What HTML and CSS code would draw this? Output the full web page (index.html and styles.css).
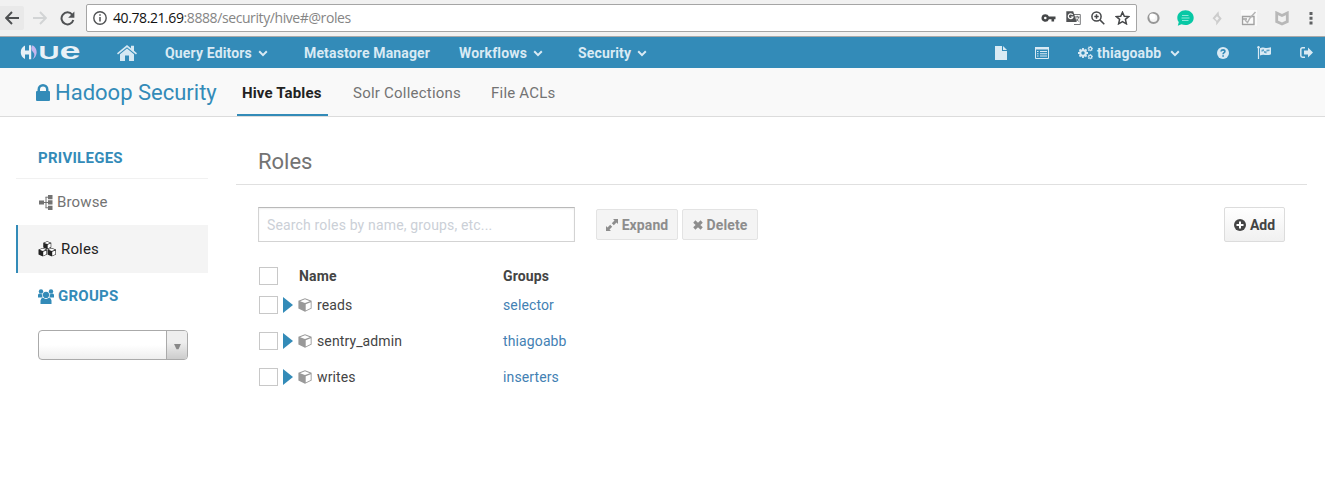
FILE: index.html
```html
<!DOCTYPE html>
<html lang="en">
<head>
<meta charset="utf-8">
<title>Hadoop Security</title>
<link rel="stylesheet" href="styles.css">
</head>
<body>
<svg class="defs" width="0" height="0">
  <symbol id="chev" viewBox="0 0 10 7"><path d="M1.2 1.3 5 5.1 8.8 1.3" fill="none" stroke="currentColor" stroke-width="2"/></symbol>
  <symbol id="cube" viewBox="0 0 14 14"><path d="M7 .3 13.6 2.8V10.6L7 13.7.4 10.6V2.8Z" fill="currentColor"/><path d="M7 1.3 11.9 3.2 7 5.1 2.1 3.2ZM7.7 6.2 12.7 4.2V10L7.7 12.4Z" fill="#fff"/></symbol>
  <symbol id="gear" viewBox="0 0 12 12"><circle cx="6" cy="6" r="3.3" fill="none" stroke="currentColor" stroke-width="2.4"/><path d="M6 0V2.5M6 9.5V12M0 6H2.5M9.5 6H12M1.8 1.8 3.3 3.3M8.7 8.7 10.2 10.2M10.2 1.8 8.7 3.3M3.3 8.7 1.8 10.2" stroke="currentColor" stroke-width="2.2"/></symbol>
</svg>

<div class="browser">
  <span class="back"><svg width="14" height="14" viewBox="0 0 14 14"><path d="M14 7H1.5M7 1 1.2 7 7 13" fill="none" stroke="#4d4f51" stroke-width="1.9"/></svg></span>
  <svg class="forward" width="14" height="14" viewBox="0 0 14 14"><path d="M0 7H12.5M7 1 12.8 7 7 13" fill="none" stroke="#d2d4d5" stroke-width="1.9"/></svg>
  <svg class="reload" width="15" height="15" viewBox="0 0 15 15"><path d="M12.2 3.6A6 6 0 1 0 13.3 9" fill="none" stroke="#505254" stroke-width="2"/><path d="M14.4.5V6.7H8.2Z" fill="#505254"/></svg>
  <div class="address">
    <svg class="info" width="14" height="14" viewBox="0 0 14 14"><circle cx="7" cy="7" r="6.2" fill="none" stroke="#505254" stroke-width="1.4"/><path d="M7 6V10.6M7 3.2V4.7" stroke="#505254" stroke-width="1.5"/></svg>
    <span class="url"><b>40.78.21.69</b>:8888/security/hive#@roles</span>
    <span class="tools">
      <svg width="15" height="14" viewBox="0 0 15 14"><path d="M4.3 3.2a3.8 3.8 0 1 0 3.6 5h2.6v2.4h2.6V8.200h1.400V5.600H7.900A3.800 3.800 0 0 0 4.300 3.200Zm0 2.500a1.300 1.300 0 1 1 0 2.600 1.300 1.300 0 0 1 0-2.600Z" fill="#454749" fill-rule="evenodd"/></svg>
      <svg width="15" height="14" viewBox="0 0 15 14"><path d="M6 3.500H14.300V13.500H8" fill="#fff" stroke="#77797b"/><path d="M.3.3H7.200L10.700 11H.3Z" fill="#505254"/><path d="M6.700 3.900A2.400 2.400 0 1 0 7 6H4.800" fill="none" stroke="#fff" stroke-width="1.200"/><path d="M9 6H13.500M11.200 4.800V6M12.800 6C12 8.500 11 9.500 9.800 10.300M10 7.500 12.700 10.500" stroke="#66686a" fill="none"/></svg>
      <svg width="14" height="14" viewBox="0 0 14 14"><circle cx="5.500" cy="5.500" r="4.600" fill="none" stroke="#454749" stroke-width="1.500"/><path d="M8.900 8.900 13.300 13.300M3.300 5.500H7.700M5.500 3.300V7.700" stroke="#454749" stroke-width="1.500"/></svg>
      <svg width="15" height="14" viewBox="0 0 15 14"><path d="M7.500 1.200 9.300 5.200 13.700 5.600 10.400 8.400 11.400 12.800 7.500 10.500 3.600 12.800 4.600 8.400 1.300 5.600 5.700 5.200Z" fill="none" stroke="#454749" stroke-width="1.500"/></svg>
    </span>
  </div>
  <svg class="ext e1" width="13" height="14" viewBox="0 0 13 14"><circle cx="6.500" cy="7" r="5" fill="#f5f5f5" stroke="#969696" stroke-width="2.200"/><circle cx="5.300" cy="5.500" r="3" fill="#fff"/></svg>
  <svg class="ext e2" width="17" height="16" viewBox="0 0 17 16"><path d="M8.500.3C13 .3 16.700 3.500 16.700 7.700S13 15 8.500 15C6.800 15 5.500 14.700 4.500 14.200L.8 15.700 1.800 12C.8 11 .3 9.500.3 7.700.3 3.500 4 .3 8.500.3Z" fill="#08c8a5"/><path d="M5 5.500H11.500M4.500 8H12.500M5 10.500H11.500" stroke="#8de9d9" stroke-width="1.200"/></svg>
  <svg class="ext e3" width="10" height="15" viewBox="0 0 10 15"><path d="M6.500.3 7 4.500 9.700 7.500 4.200 14.500V10.700L.5 7.200Z" fill="#cdcdcd"/><path d="M5 5.200 7 7.300 5 9.700 3 7.400Z" fill="#f2f2f2"/></svg>
  <svg class="ext e4" width="16" height="16" viewBox="0 0 16 16"><path d="M0 0H16V16H0Z" fill="#fafafa"/><path d="M1.500 6.500H13V14.500H1.500ZM1.500 9H6" fill="none" stroke="#a1a1a1" stroke-width="1.400"/><path d="M4 10 6.500 12.500 9 8 14.500 2" fill="none" stroke="#b5b5b5" stroke-width="1.500"/></svg>
  <svg class="ext e5" width="14" height="15" viewBox="0 0 14 15"><path d="M1.700 2 7 4.500 12.300 2V10.500L7 13 1.700 10.500Z" fill="none" stroke="#b8b8b8" stroke-width="2.800"/></svg>
  <svg class="ext e6" width="4" height="14" viewBox="0 0 4 14"><path d="M.5 1H3.500V4H.5ZM.5 5.800H3.500V8.800H.5ZM.5 10.600H3.500V13.600H.5Z" fill="#5f6163"/></svg>
</div>

<nav class="navbar">
  <svg class="logo" width="64" height="31" viewBox="0 -7 64 31">
    <path d="M7 1.500A7.500 7.500 0 0 0 7 15V10.500H11V15.200H13.200V1.200H11V6.500H7Z" fill="#e9f1f7"/>
    <path d="M14.500 1.200A8 8 0 0 1 14.500 15.200Q18 11 15 8T14.500 1.200Z" fill="#c5b6ee"/>
    <text class="mark" x="20.500" y="15.200" textLength="21" lengthAdjust="spacingAndGlyphs">U</text>
    <text class="mark lower" x="41.500" y="15" textLength="21" lengthAdjust="spacingAndGlyphs">e</text>
  </svg>
  <svg class="home" width="20" height="16" viewBox="0 0 20 16"><path d="M0 8.300 10 0 14 3.300V.8H17V5.800L20 8.300 19 9.500 10 2.200 1 9.500ZM3 9.200 10 3.500 17 9.200V16H12V10.500H8V16H3Z" fill="#d5e8f3"/></svg>
  <span class="item query">Query Editors<svg width="10" height="7"><use href="#chev"/></svg></span>
  <span class="item meta">Metastore Manager</span>
  <span class="item work">Workflows<svg width="10" height="7"><use href="#chev"/></svg></span>
  <span class="item sec">Security<svg width="10" height="7"><use href="#chev"/></svg></span>
  <span class="right">
    <svg class="file" width="12" height="14" viewBox="0 0 12 14"><path d="M0 0H7V5H12V14H0ZM8 0 12 4H8Z" fill="currentColor"/></svg>
    <svg class="list" width="14" height="12" viewBox="0 0 14 12"><path d="M.5.500H13.500V11.500H.5Z" fill="none" stroke="currentColor"/><path d="M0 0H14V2.500H0ZM2 4H3.500V5H2ZM5 4H12V5H5ZM2 6.300H3.500V7.300H2ZM5 6.300H12V7.300H5ZM2 8.600H3.500V9.600H2ZM5 8.600H12V9.600H5Z" fill="currentColor"/></svg>
    <svg class="gears" width="15" height="14" viewBox="0 0 15 14"><use href="#gear" x="0" y="2" width="10" height="10"/><use href="#gear" x="9.500" y="0" width="5.500" height="5.500"/><use href="#gear" x="9.500" y="8" width="5.500" height="5.500"/></svg>
    <span class="item user">thiagoabb<svg width="10" height="7"><use href="#chev"/></svg></span>
    <svg class="help" width="12" height="12" viewBox="0 0 12 12"><circle cx="6" cy="6" r="6" fill="currentColor"/><path d="M4 4.500C4.200 2.300 7.900 2.400 7.900 4.400 7.900 5.700 6.100 5.700 6.100 7.200M6.100 8.200V9.800" fill="none" stroke="#338bb8" stroke-width="1.600"/></svg>
    <svg class="flag" width="15" height="13" viewBox="0 0 15 13"><path d="M1.500 1V13" stroke="currentColor" stroke-width="1.200"/><circle cx="1.500" cy="1.200" r="1.200" fill="currentColor"/><path d="M3 2.200C6 .2 8 3.200 14 1.200V8.200C9 10.500 7 7.200 3 9.500Z" fill="currentColor"/><path d="M4.500 3.800 7 3.200V5L9.500 5.500V3.800L12.500 3.400V5L9.500 5.600V7.400L7 6.700V5.100L4.500 5.700Z" fill="#338bb8" opacity=".75"/></svg>
    <svg class="out" width="13" height="11" viewBox="0 0 13 11"><path d="M5 .8H2.500Q.8.800.8 2.500V8.500Q.8 10.200 2.500 10.200H5" fill="none" stroke="currentColor" stroke-width="1.500"/><path d="M4 3.500H8V.5L13 5.500 8 10.500V7.500H4Z" fill="currentColor"/></svg>
  </span>
</nav>

<header class="subnav">
  <svg class="lock" width="14" height="17" viewBox="0 0 14 17"><path d="M0 8Q0 7 1 7H1.500V5.500A5.500 5.500 0 0 1 12.500 5.500V7H13Q14 7 14 8V16Q14 17 13 17H1Q0 17 0 16ZM4 7H10V5.500A3 3 0 0 0 4 5.500Z" fill="#338bb8" fill-rule="evenodd"/></svg>
  <span class="app">Hadoop Security</span>
  <span class="tab active">Hive Tables</span>
  <span class="tab solr">Solr Collections</span>
  <span class="tab acl">File ACLs</span>
</header>

<div class="page">
  <aside class="side">
    <div class="head first">PRIVILEGES</div>
    <div class="entry"><svg class="tree" width="14" height="15" viewBox="0 0 14 15"><path d="M0 5.500H5V9.500H0ZM9 0H13.500V4.300H9ZM9 5.300H13.500V9.600H9ZM9 10.700H13.500V15H9Z" fill="currentColor"/><path d="M4 7.500H10M7 2.200V12.800M6.500 2.200H9M6.500 12.800H9" fill="none" stroke="currentColor"/></svg><span class="browse">Browse</span></div>
    <div class="entry current"><svg class="cubes" width="19" height="16" viewBox="0 0 19 16"><use href="#cube" x="4.500" y="0" width="9.500" height="8.500"/><use href="#cube" x="0" y="6.700" width="9.500" height="9"/><use href="#cube" x="9" y="6.700" width="9.500" height="9"/></svg><span>Roles</span></div>
    <div class="head groups"><svg width="16" height="15" viewBox="0 0 16 15"><circle cx="3" cy="2.500" r="2.200"/><circle cx="13" cy="2.500" r="2.200"/><path d="M0 8.500V6Q0 4.500 1.500 4.500L4.500 5.500Q3.800 7.200 4.700 8.500ZM16 8.500V6Q16 4.500 14.500 4.500L11.500 5.500Q12.200 7.200 11.300 8.500ZM2.500 15V11.500Q2.800 8.800 5 8.800 8 11 11 8.800 13.200 8.800 13.500 11.500V15Z"/><circle cx="8" cy="5.900" r="3.100"/></svg><span>GROUPS</span></div>
    <div class="select"><span class="arrow"><svg width="7" height="6" viewBox="0 0 8 7"><path d="M0 0H8L5.200 6H2.800Z" fill="#888"/></svg></span></div>
  </aside>
  <main class="main">
    <h1>Roles</h1>
    <div class="toolbar">
      <input class="search" type="text" placeholder="Search roles by name, groups, etc...">
      <button class="btn off expand"><svg width="12" height="12" viewBox="0 0 12 12"><path d="M7 0H12V5L10.500 3.500 7.800 6.200 5.800 4.200 8.500 1.500ZM5 12H0V7L1.500 8.500 4.200 5.800 6.200 7.800 3.500 10.500Z" fill="currentColor"/><path d="M4.500 4.500 7.500 7.500" stroke="#f4f4f4"/></svg><span>Expand</span></button>
      <button class="btn off delete"><svg width="10" height="10" viewBox="0 0 10 10"><path d="M1.300 1.500 8.700 8.500M8.700 1.500 1.300 8.500" stroke="currentColor" stroke-width="3.100"/></svg><span>Delete</span></button>
      <button class="btn add"><svg width="12" height="12" viewBox="0 0 12 12"><circle cx="6" cy="6" r="6" fill="currentColor"/><path d="M6 2.500V9.500M2.500 6H9.500" stroke="#fff" stroke-width="2"/></svg><span>Add</span></button>
    </div>
    <div class="row th"><i class="check"></i><span class="name">Name</span><span class="group">Groups</span></div>
    <div class="row"><i class="check"></i><i class="tri"></i><svg width="14" height="14"><use href="#cube"/></svg><span class="name">reads</span><a class="group">selector</a></div>
    <div class="row"><i class="check"></i><i class="tri"></i><svg width="14" height="14"><use href="#cube"/></svg><span class="name">sentry_admin</span><a class="group">thiagoabb</a></div>
    <div class="row"><i class="check"></i><i class="tri"></i><svg width="14" height="14"><use href="#cube"/></svg><span class="name">writes</span><a class="group">inserters</a></div>
  </main>
</div>
</body>
</html>
```

FILE: styles.css
```css
* { box-sizing: border-box; }
body { margin: 0; height: 497px; overflow: hidden; background: #fff; font: 14px/20px Roboto, "Liberation Sans", sans-serif; color: #444; white-space: nowrap; }
svg { flex: none; display: block; }
.defs { position: absolute; }

.browser { display: flex; align-items: center; height: 37px; background: #f1f1f1; border-bottom: 1px solid #a9a9a9; }
.back { display: flex; align-items: center; padding-left: 5px; width: 24px; height: 24px; background: #e9e9e9; border-radius: 0 2px 2px 0; }
.forward { margin-left: 9px; }
.reload { margin-left: 13px; }
.address { display: flex; align-items: center; margin-left: 11px; width: 1051px; height: 28px; background: #fff; border: 1px solid #a5a5a5; border-radius: 2px; padding-left: 6px; }
.url { margin-left: 6px; font: 14px/20px "Open Sans", sans-serif; color: #858585; letter-spacing: -0.41px; }
.url b { font-weight: 400; color: #111; }
.tools { display: flex; align-items: center; gap: 10px; margin-left: auto; padding-right: 6px; }
.e1 { margin-left: 10px; }
.e2 { margin-left: 17px; }
.e3 { margin-left: 18px; }
.e4 { margin-left: 19px; }
.e5 { margin-left: 18px; }
.e6 { margin-left: 20px; }

.navbar { display: flex; align-items: center; height: 31px; background: #338bb8; color: #d9eaf4; font-weight: 700; letter-spacing: .15px; }
.logo { margin-left: 18px; }
.mark { font: 700 19px "Liberation Sans", sans-serif; fill: #e9f1f7; letter-spacing: 0; }
.mark.lower { font-size: 24px; }
.home { margin-left: 35px; }
.item { display: flex; align-items: center; justify-content: space-between; height: 31px; padding-top: 1px; }
.query { margin-left: 28px; width: 103px; }
.meta { margin-left: 36px; width: 127px; }
.work { margin-left: 28px; width: 84px; }
.sec { margin-left: 35px; width: 69px; }
.right { display: flex; align-items: center; margin-left: auto; padding-right: 12px; }
.list { margin-left: 28px; }
.gears { margin-left: 29px; }
.user { margin-left: 4px; width: 83px; }
.help { margin-left: 37px; }
.flag { margin-left: 28px; }
.out { margin-left: 28px; }

.subnav { display: flex; align-items: center; height: 49px; background: #f9f9f9; border-bottom: 1px solid #dcdcdc; }
.lock { margin-left: 36px; }
.app { margin-left: 5px; padding-top: 2px; width: 162px; font-size: 22px; color: #338bb8; }
.tab { height: 48px; line-height: 50px; font-size: 15px; color: #737373; letter-spacing: .22px; }
.tab.active { margin-left: 20px; width: 91px; padding-left: 5px; border-bottom: 2px solid #338bb8; color: #222; font-weight: 700; letter-spacing: .15px; }
.solr { margin-left: 25px; width: 108px; }
.acl { margin-left: 30px; }

.page { display: flex; }
.side { margin-left: 16px; width: 192px; padding-top: 20px; color: #737373; }
.head { display: flex; align-items: center; height: 46px; padding-left: 22px; color: #338bb8; font-size: 15px; font-weight: 700; letter-spacing: .25px; }
.head.first { height: 42px; border-bottom: 1px solid #f1f1f1; }
.head svg { fill: #338bb8; margin-right: 4px; }
.entry { display: flex; align-items: center; height: 46px; padding-left: 23px; gap: 4px; font-size: 15px; letter-spacing: .15px; }
.entry.current { height: 48px; padding-left: 20px; background: #f4f4f4; border-left: 2px solid #338bb8; color: #222; }
.select { margin: 11px 0 0 22px; width: 150px; height: 30px; display: flex; justify-content: flex-end; border: 1px solid #aaa; border-radius: 4px; background: linear-gradient(#fff 50%, #eee); overflow: hidden; }
.arrow { display: flex; align-items: center; justify-content: center; width: 21px; padding-top: 4px; border-left: 1px solid #aaa; background: linear-gradient(#eee 40%, #ccc); }

.main { margin-left: 28px; width: 1071px; }
h1 { margin: 0; height: 68px; padding: 34px 0 0 22px; border-bottom: 1px solid #e0e0e0; color: #737373; font-size: 22px; font-weight: 400; line-height: 22px; letter-spacing: 0; }
.toolbar { display: flex; margin: 22px 22px 0; height: 35px; }
.search { width: 317px; height: 35px; margin: 0; padding: 1px 8px 0; border: 1px solid #d3d3d3; border-top-color: #b9b9b9; box-shadow: inset 0 1px 2px #eee; font: 14px Roboto, sans-serif; letter-spacing: .16px; }
.search::placeholder { color: #cbd0d7; opacity: 1; }
.btn { display: flex; align-items: center; justify-content: center; gap: 4px; padding: 0; border: 1px solid #dcdcdc; border-radius: 2px; font: 700 14px Roboto, sans-serif; color: #444; }
.off { height: 31px; margin-top: 2px; border-color: #e3e3e3; background: #f4f4f4; color: #8d8d8d; letter-spacing: .1px; }
.expand { margin-left: 21px; width: 82px; }
.delete { margin-left: 4px; width: 76px; }
.add { margin-left: auto; width: 61px; height: 35px; background: linear-gradient(#fff, #f0f0f0); }
.row { display: flex; align-items: center; height: 36px; padding-left: 23px; }
.row.th { height: 22px; margin-top: 23px; color: #444; font-weight: 700; }
.check { width: 19px; height: 18px; border: 1px solid #c8c8c8; background: #fff; }
.tri { margin: 0 6px 0 5px; border-left: 10px solid #338bb8; border-top: 8.5px solid transparent; border-bottom: 8.5px solid transparent; }
.row svg { color: #999; margin-left: -1px; }
.row .name { margin-left: 5px; width: 186px; letter-spacing: .12px; }
.row.th .name { margin-left: 21px; width: 204px; letter-spacing: .15px; }
.row a { color: #4381b3; letter-spacing: .12px; }
.row.th .group { letter-spacing: .15px; }
```
